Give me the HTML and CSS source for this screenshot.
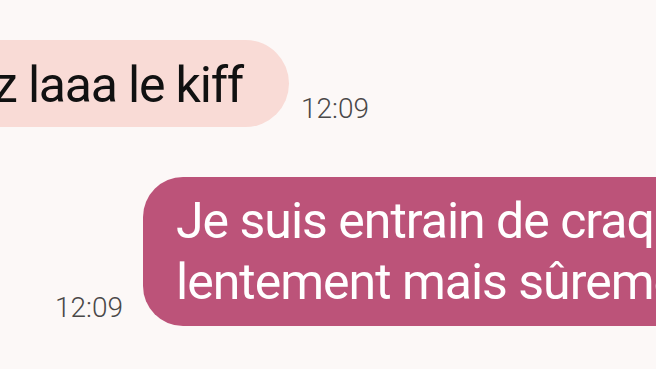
FILE: index.html
```html
<!DOCTYPE html>
<html lang="fr">
<head>
    <meta charset="UTF-8">
    <title>Messages</title>
    <link rel="stylesheet" href="styles.css">
</head>
<body>
<div class="chat">
    <div class="row row-in">
        <div class="bubble bubble-in"><span class="clip">Allez laaa le kiff</span></div>
        <span class="time">12:09</span>
    </div>
    <div class="row row-out">
        <span class="time">12:09</span>
        <div class="bubble bubble-out">Je suis entrain de craquer<br>lentement mais sûrement</div>
    </div>
</div>
</body>
</html>
```

FILE: styles.css
```css
*{
    margin: 0;
    padding: 0;
    box-sizing: border-box;
}

html,body{
    width: 656px;
    height: 369px;
    overflow: hidden;
}

body{
    background: #fcf8f7;
    font-family: Roboto, "Liberation Sans", sans-serif;
}

.chat{
    padding-top: 40px;
}

.row{
    display: flex;
    align-items: flex-end;
}

.bubble{
    white-space: nowrap;
    flex-shrink: 0;
}

.time{
    font-size: 28px;
    font-weight: 300;
    color: #4a4848;
    line-height: 28px;
}

/* incoming message, its start runs off the left edge */
.row-in{
    gap: 12px;
}
.bubble-in{
    display: flex;
    align-items: center;
    justify-content: flex-end;
    width: 349px;
    height: 87px;
    margin-left: -60px;
    padding: 2px 46px 0 0;
    overflow: hidden;
    background: #f9dbd6;
    border-radius: 44px;
    font-size: 50px;
    letter-spacing: -1.2px;
    color: #111;
}
.row-in .time{
    margin-bottom: 4px;
}

/* outgoing message, runs off the right edge */
.row-out{
    margin-top: 50px;
    padding-left: 55px;
    gap: 20px;
}
.bubble-out{
    padding: 14px 40px 13px 33px;
    background: #bc5379;
    border-radius: 40px;
    font-size: 50px;
    line-height: 61px;
    letter-spacing: -1px;
    color: #fff;
}
.row-out .time{
    margin-bottom: 4px;
}
```
